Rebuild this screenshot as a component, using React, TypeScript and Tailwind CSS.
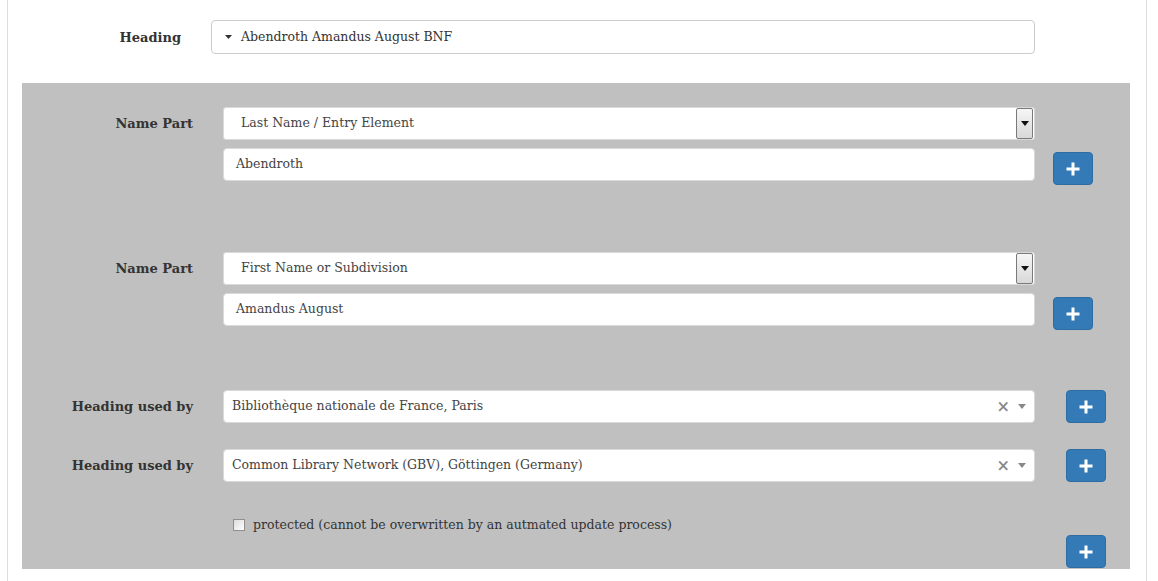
import React from "react";

const font = { fontFamily: '"DejaVu Serif", Georgia, serif' };

function PlusButton({ className = "" }: { className?: string }) {
  return (
    <button
      type="button"
      className={`w-[40px] h-[33px] shrink-0 rounded-[4px] bg-[#337ab7] border border-[#2e6da4] flex items-center justify-center ${className}`}
    >
      <svg width="14" height="14" viewBox="0 0 14 14">
        <rect x="5.5" y="0.5" width="3" height="13" fill="#fff" />
        <rect x="0.5" y="5.5" width="13" height="3" fill="#fff" />
      </svg>
    </button>
  );
}

function NativeSelect({ value }: { value: string }) {
  return (
    <div className="w-[812px] h-[33px] bg-white rounded-[3px] border border-[#d9d9d9] flex items-center">
      <span className="flex-1 pl-[17px] text-[12.5px] text-[#444]">{value}</span>
      <div className="w-[17px] h-[31px] mr-[1px] border border-[#7a7a7a] rounded-[2px] bg-gradient-to-b from-[#f6f6f6] to-[#d8d8d8] flex items-center justify-center">
        <svg width="8" height="5" viewBox="0 0 8 5">
          <path d="M0 0 L8 0 L4 5 Z" fill="#111" />
        </svg>
      </div>
    </div>
  );
}

function TextInput({ value }: { value: string }) {
  return (
    <div className="w-[812px] h-[33px] bg-white rounded-[4px] border border-[#d9d9d9] flex items-center pl-[12px] text-[12.5px] text-[#444]">
      {value}
    </div>
  );
}

function Select2({ value }: { value: string }) {
  return (
    <div className="w-[812px] h-[33px] bg-white rounded-[4px] border border-[#d9d9d9] flex items-center pl-[8px] pr-[8px] text-[12.5px] text-[#444]">
      <span className="flex-1">{value}</span>
      <span className="text-[#888] text-[16px] font-bold leading-none mr-[8px]">×</span>
      <svg width="8" height="5" viewBox="0 0 8 5">
        <path d="M0 0 L8 0 L4 5 Z" fill="#888" />
      </svg>
    </div>
  );
}

function Label({ children }: { children: React.ReactNode }) {
  return (
    <div className="w-[171px] shrink-0 text-right font-bold text-[13px] text-[#333]">
      {children}
    </div>
  );
}

function NamePart({ type, value }: { type: string; value: string }) {
  return (
    <div className="flex">
      <div className="w-[171px] shrink-0 pt-[7px]">
        <Label>Name Part</Label>
      </div>
      <div className="ml-[30px] flex flex-col gap-[8px]">
        <NativeSelect value={type} />
        <div className="flex items-start">
          <TextInput value={value} />
          <PlusButton className="ml-[18px] mt-[4px]" />
        </div>
      </div>
    </div>
  );
}

function UsedBy({ value }: { value: string }) {
  return (
    <div className="flex items-center">
      <Label>Heading used by</Label>
      <div className="ml-[30px]">
        <Select2 value={value} />
      </div>
      <PlusButton className="ml-[31px]" />
    </div>
  );
}

export default function App() {
  return (
    <div className="w-[1158px] h-[581px] bg-white overflow-hidden" style={font}>
      <div className="ml-[7px] w-[1140px] h-full border-l border-r border-[#dddddd] pt-[20px]">
        <div className="flex items-center">
          <div className="w-[173px] shrink-0 text-right font-bold text-[13px] text-[#333] pt-[1px]">Heading</div>
          <div className="ml-[30px] w-[824px] h-[34px] rounded-[4px] border border-[#cccccc] flex items-center pl-[13px] text-[12.5px] text-[#333]">
            <svg width="7" height="4" viewBox="0 0 7 4" className="mr-[9px]">
              <path d="M0 0 L7 0 L3.5 4 Z" fill="#333" />
            </svg>
            Abendroth Amandus August BNF
          </div>
        </div>

        <div className="mt-[29px] ml-[14px] w-[1108px] bg-[#c0c0c0] pt-[24px] pb-[1px]">
          <NamePart type="Last Name / Entry Element" value="Abendroth" />
          <div className="h-[67px]" />
          <NamePart type="First Name or Subdivision" value="Amandus August" />
          <div className="h-[60px]" />
          <div className="flex flex-col gap-[26px]">
            <UsedBy value="Bibliothèque nationale de France, Paris" />
            <UsedBy value="Common Library Network (GBV), Göttingen (Germany)" />
          </div>
          <div className="mt-[34px] h-[18px] ml-[211px] flex items-center text-[12.5px] text-[#333]">
            <span className="w-[12px] h-[12px] border border-[#8f8f8f] bg-gradient-to-br from-[#dcdcdc] to-[#ffffff] mr-[8px]" />
            protected (cannot be overwritten by an autmated update process)
          </div>
          <div className="flex justify-end pr-[24px] mt-[1px]">
            <PlusButton />
          </div>
        </div>
      </div>
    </div>
  );
}
